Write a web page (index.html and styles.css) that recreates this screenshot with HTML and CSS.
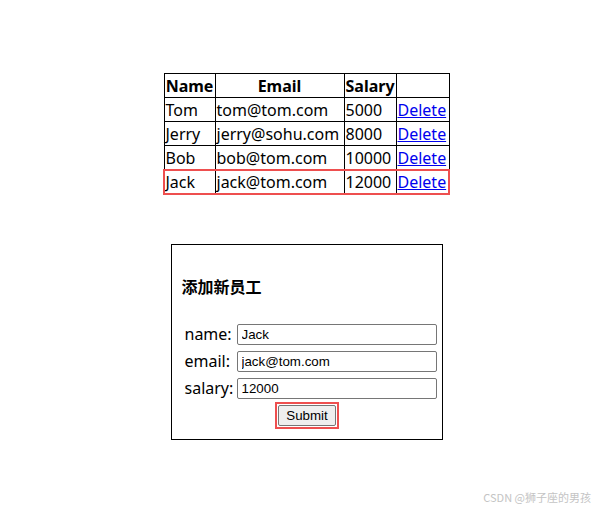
FILE: index.html
```html
<!DOCTYPE html>
<html>
<head>
<meta charset="utf-8">
<title>员工管理</title>
<link rel="stylesheet" href="styles.css">
</head>
<body>
<main class="page">
  <table class="emp-table">
    <colgroup>
      <col class="c-name"><col class="c-email"><col class="c-salary"><col class="c-act">
    </colgroup>
    <thead>
      <tr><th>Name</th><th>Email</th><th>Salary</th><th></th></tr>
    </thead>
    <tbody>
      <tr><td>Tom</td><td>tom@tom.com</td><td>5000</td><td><a href="#">Delete</a></td></tr>
      <tr><td>Jerry</td><td>jerry@sohu.com</td><td>8000</td><td><a href="#">Delete</a></td></tr>
      <tr><td>Bob</td><td>bob@tom.com</td><td>10000</td><td><a href="#">Delete</a></td></tr>
      <tr class="new-row"><td>Jack</td><td>jack@tom.com</td><td>12000</td><td><a href="#">Delete</a></td></tr>
    </tbody>
  </table>

  <form class="add-box" onsubmit="return false">
    <h3 class="add-title">添加新员工</h3>
    <div class="fields">
      <label class="lbl" for="f-name">name:</label>
      <input class="inp" id="f-name" type="text" value="Jack">
      <label class="lbl" for="f-email">email:</label>
      <input class="inp" id="f-email" type="text" value="jack@tom.com">
      <label class="lbl" for="f-salary">salary:</label>
      <input class="inp" id="f-salary" type="text" value="12000">
    </div>
    <div class="btn-row">
      <span class="btn-mark"><button class="submit" type="submit">Submit</button></span>
    </div>
  </form>
</main>
<div class="watermark">CSDN @狮子座的男孩</div>
</body>
</html>
```
FILE: styles.css
```css
html, body {
  margin: 0;
  padding: 0;
  background: #ffffff;
}
body {
  margin: 8px;
  font-family: "Noto Sans", "Noto Sans CJK SC", sans-serif;
  font-size: 16px;
  color: #000;
}
.page {
  display: flex;
  flex-direction: column;
  align-items: center;
  padding-top: 65px;
  padding-left: 16px;
}
.emp-table {
  border-collapse: collapse;
  table-layout: fixed;
  width: 285px;
}
.c-name { width: 51px; }
.c-email { width: 129px; }
.c-salary { width: 52px; }
.c-act { width: 53px; }
.emp-table th,
.emp-table td {
  border: 1px solid #000;
  padding: 2px 1px 0 1px;
  line-height: 21px;
  height: 21px;
  white-space: nowrap;
  overflow: visible;
}
.emp-table th {
  font-weight: 700;
  text-align: center;
}
.emp-table td {
  text-align: left;
}
.emp-table a {
  color: #0000ee;
  text-decoration: underline;
}
.new-row {
  outline: 2px solid #ee4f4f;
  outline-offset: -1px;
}
.add-box {
  margin-top: 50px;
  width: 250px;
  border: 1px solid #000;
  padding: 30px 10px 10px 10px;
}
.add-title {
  margin: 0;
  font-family: "Noto Sans CJK SC", sans-serif;
  font-size: 16px;
  font-weight: 700;
  line-height: 22px;
}
.fields {
  margin-top: 24px;
  display: grid;
  grid-template-columns: 52px 200px;
  grid-auto-rows: 27px;
  align-items: center;
  padding-left: 3px;
  margin-right: -5px;
}
.lbl {
  line-height: 21px;
  white-space: nowrap;
}
.inp {
  box-sizing: border-box;
  width: 200px;
  height: 21px;
  margin: 0;
  padding: 1px 4px;
  border: 1px solid #767676;
  border-radius: 2px;
  font-family: "Liberation Sans", Arial, sans-serif;
  font-size: 13.33px;
  color: #000;
  background: #fff;
}
.btn-row {
  height: 27px;
  display: flex;
  align-items: center;
  justify-content: center;
  padding-left: 1px;
}
.btn-mark {
  display: flex;
  border: 2px solid #ee4f4f;
  padding: 1px;
}
.submit {
  box-sizing: border-box;
  height: 21px;
  width: 58px;
  margin: 0;
  padding: 0 6px;
  border: 1px solid #767676;
  border-radius: 2px;
  background: #efefef;
  font-family: "Liberation Sans", Arial, sans-serif;
  font-size: 13.33px;
  color: #000;
}
.watermark {
  position: absolute;
  right: 6px;
  bottom: 6px;
  font-family: "Noto Sans CJK SC", sans-serif;
  font-size: 11px;
  color: #c4c4c4;
}
```
